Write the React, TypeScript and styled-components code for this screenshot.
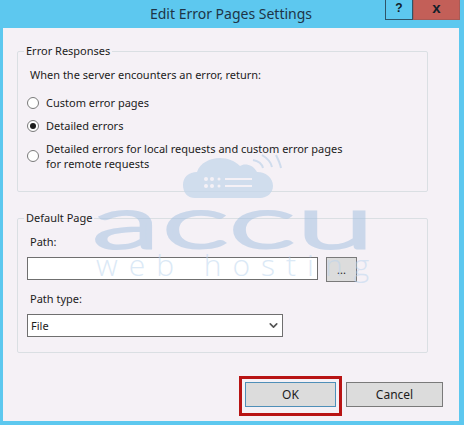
import React from "react"
import styled, { createGlobalStyle } from "styled-components"
import { ChevronDown } from "lucide-react"

const GlobalStyle = createGlobalStyle`
    html, body {
        margin: 0;
        padding: 0;
        background: #5dc8ef;
    }
`

const Window = styled.div`
    position: relative;
    width: 464px;
    height: 425px;
    box-sizing: border-box;
    padding: 0 5px 4px 3px;
    background: #5dc8ef;
    display: flex;
    flex-direction: column;
    overflow: hidden;
    font-family: "Noto Sans", "Open Sans", sans-serif;
    font-size: 11px;
    color: #1c1c1c;
`

const TitleBar = styled.div`
    height: 28px;
    flex: none;
    display: flex;
    justify-content: center;
    position: relative;
`

const Title = styled.div`
    font-size: 14px;
    line-height: 27px;
    color: #1d3547;
`

const CaptionButtons = styled.div`
    position: absolute;
    top: 0;
    right: -1px;
    display: flex;
`

const CaptionButton = styled.div<{ $close?: boolean }>`
    width: ${p => (p.$close ? "47px" : "28px")};
    height: 20px;
    box-sizing: border-box;
    display: flex;
    align-items: center;
    justify-content: center;
    border: 1px solid ${p => (p.$close ? "#a85a55" : "#2f5468")};
    border-top: none;
    background: ${p => (p.$close ? "#c35f58" : "transparent")};
    font-family: "Liberation Sans", sans-serif;
    font-weight: bold;
    font-size: ${p => (p.$close ? "15px" : "12px")};
    color: #10202a;
    padding-bottom: 4px;
`

const Body = styled.div`
    flex: 1;
    background: #f5f1f6;
    padding: 15px 31px 0 14px;
    display: flex;
    flex-direction: column;
`

const Group = styled.fieldset<{ $height: number }>`
    margin: 0;
    height: ${p => p.$height}px;
    box-sizing: border-box;
    border: 1px solid #dadfe3;
    border-radius: 2px;
    padding: 0 12px;
    min-inline-size: 0;
    & + & {
        margin-top: 18px;
    }
`

const Legend = styled.legend`
    padding: 0 2px;
    margin-left: -6px;
    line-height: 16px;
`

const Hint = styled.div`
    margin: 8px 0 0 0;
    line-height: 16px;
`

const RadioList = styled.div`
    margin-top: 12px;
    display: flex;
    flex-direction: column;
    gap: 8px;
`

const RadioRow = styled.label`
    display: flex;
    align-items: center;
    gap: 7px;
    line-height: 15px;
    margin-left: -3px;
`

const RadioDot = styled.span<{ $checked?: boolean }>`
    width: 12px;
    height: 12px;
    flex: none;
    box-sizing: border-box;
    border: 1px solid #7a7a7a;
    border-radius: 50%;
    background: #fff;
    display: flex;
    align-items: center;
    justify-content: center;
    &::after {
        content: "";
        display: ${p => (p.$checked ? "block" : "none")};
        width: 6px;
        height: 6px;
        border-radius: 50%;
        background: #1c1c1c;
    }
`

const FieldLabel = styled.div<{ $top: number }>`
    margin: ${p => p.$top}px 0 0 0;
    line-height: 16px;
`

const PathRow = styled.div`
    margin: 7px 0 0 -3px;
    display: flex;
    align-items: flex-start;
    gap: 8px;
`

const PathInput = styled.div`
    width: 291px;
    height: 23px;
    box-sizing: border-box;
    border: 1px solid #6f6f6f;
    background: #fff;
`

const SmallButton = styled.div`
    width: 31px;
    height: 25px;
    box-sizing: border-box;
    border: 1px solid #7a7a7a;
    background: #dcdcdc;
    text-align: center;
    line-height: 23px;
`

const Select = styled.div`
    margin: 7px 0 0 -3px;
    width: 256px;
    height: 23px;
    box-sizing: border-box;
    border: 1px solid #6f6f6f;
    background: #fff;
    display: flex;
    align-items: center;
    justify-content: space-between;
    padding: 0 2px 0 3px;
`

const Footer = styled.div`
    margin: 29px -15px 0 0;
    display: flex;
    justify-content: flex-end;
    gap: 10px;
`

const DialogButton = styled.div<{ $primary?: boolean }>`
    position: relative;
    width: ${p => (p.$primary ? "91px" : "97px")};
    height: 25px;
    box-sizing: border-box;
    border: 1px solid ${p => (p.$primary ? "#4f8fb8" : "#7a7a7a")};
    background: #dcdcdc;
    text-align: center;
    line-height: 23px;
    font-size: 12px;
`

const Highlight = styled.span`
    position: absolute;
    inset: -7px -7px -10px -7px;
    border: 3px solid #b81414;
    pointer-events: none;
`

// watermark lies over the whole dialog
const Watermark = styled.div`
    position: absolute;
    left: 0;
    top: 0;
    width: 464px;
    height: 425px;
    pointer-events: none;
    overflow: hidden;
`

const CloudIcon = styled.svg`
    position: absolute;
    left: 180px;
    top: 150px;
`

const AccuText = styled.div`
    position: absolute;
    left: 92px;
    top: 170px;
    font-family: "Lato", sans-serif;
    font-weight: 300;
    font-size: 72px;
    line-height: 100px;
    letter-spacing: 1px;
    color: #a7c3e2;
    opacity: 0.55;
    -webkit-text-stroke: 3px #a7c3e2;
    transform: scaleX(1.95);
    transform-origin: 0 0;
`

const HostingText = styled.div`
    position: absolute;
    left: 96px;
    top: 247px;
    font-family: "Open Sans", sans-serif;
    font-weight: 300;
    font-size: 30px;
    line-height: 36px;
    letter-spacing: 11px;
    word-spacing: 0;
    white-space: nowrap;
    color: #b9d4ef;
    opacity: 0.5;
`

const Cloud = () => (
    <CloudIcon width="110" height="50" viewBox="0 0 110 50">
        <path
            d="M15 48C7 48 3 42 3 35C3 27 9 22 17 22C20 13 30 8 40 8C48 8 55 11 60 16C64 13 73 14 77 22C86 22 93 28 93 36C93 43 87 48 80 48Z"
            fill="#c3d5ea"
            opacity="0.75"
        />
        <g fill="none" stroke="#c3d5ea" strokeWidth="2" opacity="0.75">
            <path d="M73 10C78 11 82 14 83 18" />
            <path d="M82 5C87 8 91 12 92 17" />
            <path d="M96 5C98 9 100 13 101 18" />
        </g>
        <g fill="#f5f1f6">
            <circle cx="26" cy="29" r="2" />
            <circle cx="32" cy="29" r="2" />
            <circle cx="39" cy="29" r="1.5" />
            <circle cx="26" cy="36" r="2" />
            <circle cx="32" cy="36" r="2" />
            <circle cx="39" cy="36" r="1.5" />
            <rect x="45" y="28" width="27" height="2" />
            <rect x="45" y="35" width="27" height="2" />
        </g>
    </CloudIcon>
)

const App = () => (
    <>
        <GlobalStyle />
        <Window>
            <TitleBar>
                <Title>Edit Error Pages Settings</Title>
                <CaptionButtons>
                    <CaptionButton>?</CaptionButton>
                    <CaptionButton $close>x</CaptionButton>
                </CaptionButtons>
            </TitleBar>
            <Body>
                <Group $height={149}>
                    <Legend>Error Responses</Legend>
                    <Hint>When the server encounters an error, return:</Hint>
                    <RadioList>
                        <RadioRow><RadioDot />Custom error pages</RadioRow>
                        <RadioRow><RadioDot $checked />Detailed errors</RadioRow>
                        <RadioRow>
                            <RadioDot />
                            <span>Detailed errors for local requests and custom error pages<br />for remote requests</span>
                        </RadioRow>
                    </RadioList>
                </Group>
                <Group $height={143}>
                    <Legend>Default Page</Legend>
                    <FieldLabel $top={8}>Path:</FieldLabel>
                    <PathRow>
                        <PathInput />
                        <SmallButton>...</SmallButton>
                    </PathRow>
                    <FieldLabel $top={9}>Path type:</FieldLabel>
                    <Select>
                        File
                        <ChevronDown size={13} strokeWidth={3} color="#555" />
                    </Select>
                </Group>
                <Footer>
                    <DialogButton $primary>OK<Highlight /></DialogButton>
                    <DialogButton>Cancel</DialogButton>
                </Footer>
            </Body>
            <Watermark>
                <Cloud />
                <AccuText>accu</AccuText>
                <HostingText>web hosting</HostingText>
            </Watermark>
        </Window>
    </>
)

export default App
